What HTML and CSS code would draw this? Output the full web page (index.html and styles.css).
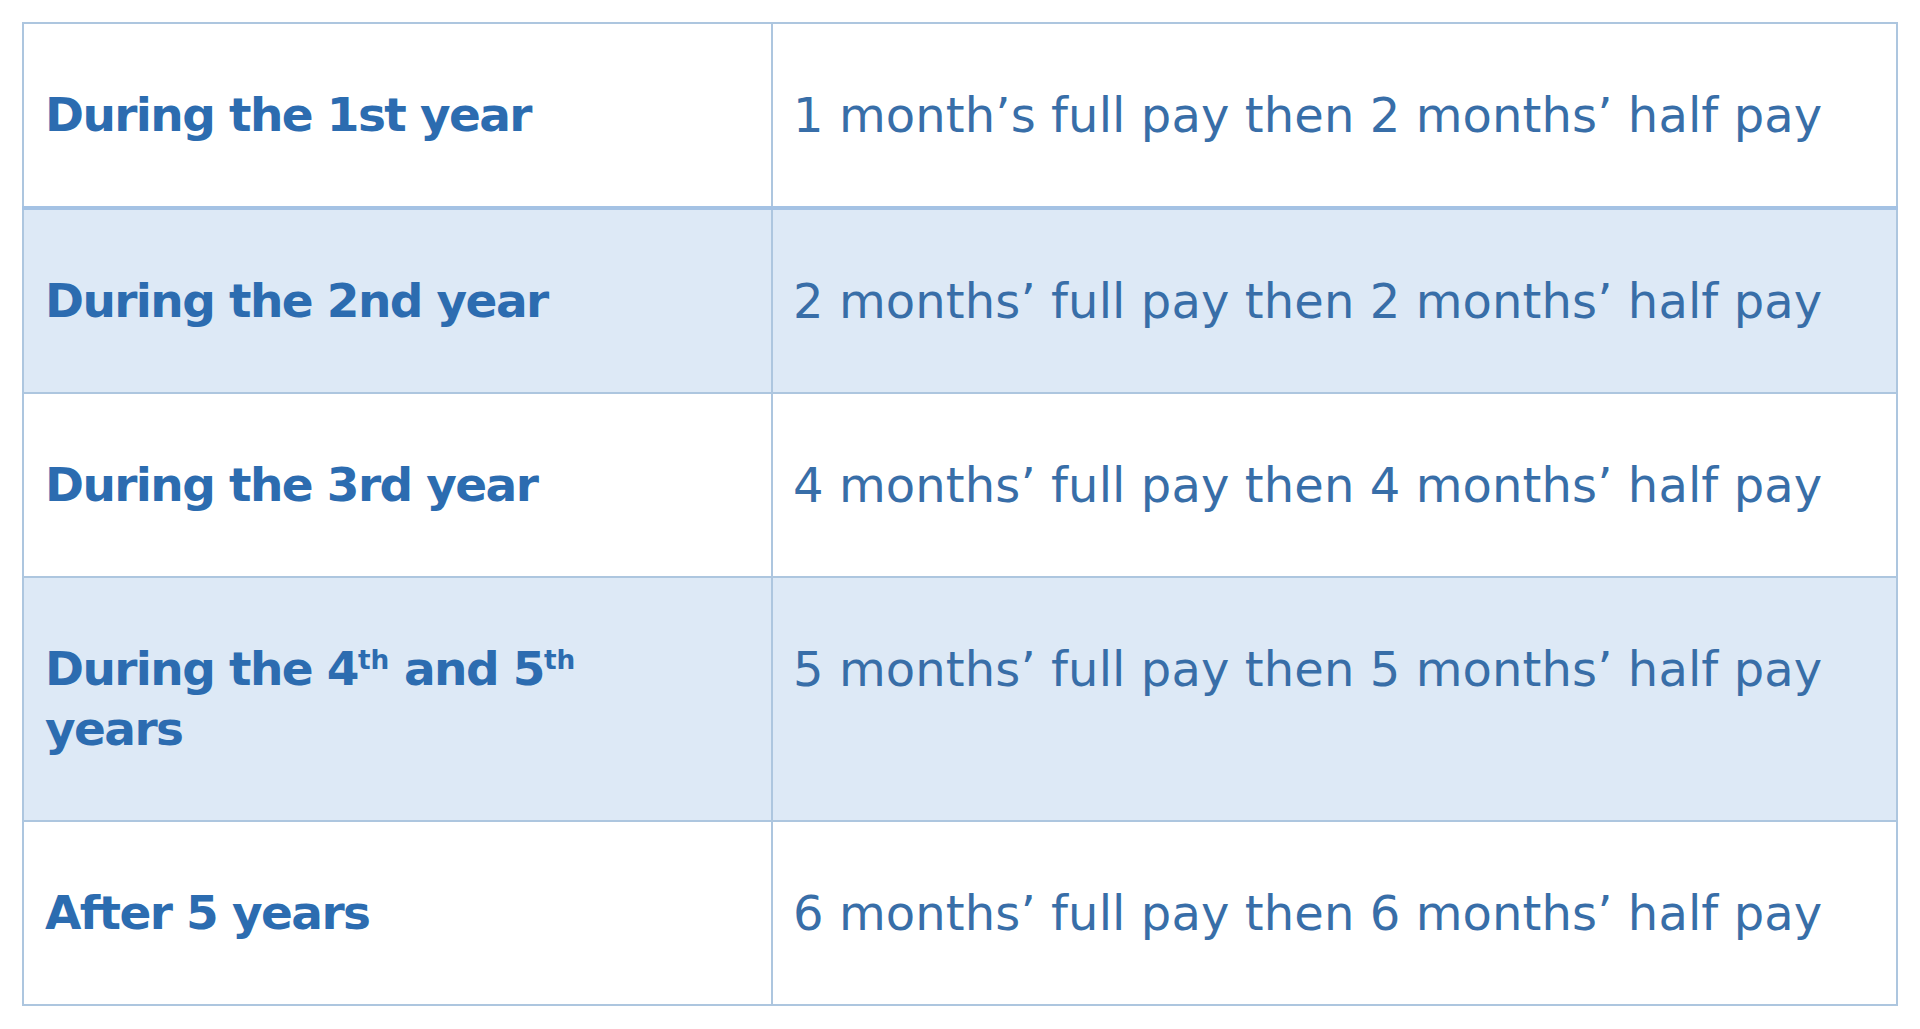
FILE: index.html
```html
<!DOCTYPE html>
<html lang="en">
<head>
<meta charset="utf-8">
<title>Sick pay entitlement</title>
<link rel="stylesheet" href="styles.css">
</head>
<body>
<div class="page">
  <table class="pay-table">
    <colgroup>
      <col class="col-term">
      <col class="col-pay">
    </colgroup>
    <tbody>
      <tr class="row row-first">
        <th class="term">During the 1st year</th>
        <td class="pay">1 month’s full pay then 2 months’ half pay</td>
      </tr>
      <tr class="row row-shaded">
        <th class="term">During the 2nd year</th>
        <td class="pay">2 months’ full pay then 2 months’ half pay</td>
      </tr>
      <tr class="row">
        <th class="term">During the 3rd year</th>
        <td class="pay">4 months’ full pay then 4 months’ half pay</td>
      </tr>
      <tr class="row row-shaded">
        <th class="term">During the 4<sup>th</sup> and 5<sup>th</sup> years</th>
        <td class="pay">5 months’ full pay then 5 months’ half pay</td>
      </tr>
      <tr class="row">
        <th class="term">After 5 years</th>
        <td class="pay">6 months’ full pay then 6 months’ half pay</td>
      </tr>
    </tbody>
  </table>
</div>
</body>
</html>
```
FILE: styles.css
```css
html, body {
  margin: 0;
  padding: 0;
  background: #ffffff;
}

.page {
  padding: 22px 22px 24px 22px;
}

.pay-table {
  width: 1876px;
  border-collapse: collapse;
  table-layout: fixed;
  font-family: "DejaVu Sans", "Liberation Sans", sans-serif;
  font-size: 48px;
  line-height: 58px;
  color: #2f6daa;
}

.col-term {
  width: 749px;
}

.row > th,
.row > td {
  border: 2px solid #adc6df;
  vertical-align: top;
  text-align: left;
  padding: 62px 20px 62px 21px;
}

.row-first > th,
.row-first > td {
  border-bottom: 4px solid #a4c2e4;
}

.row-shaded > th,
.row-shaded > td {
  background: #dde9f6;
}

.row > .term {
  font-weight: 700;
  font-size: 47px;
  line-height: 60px;
  color: #2c6cb0;
  letter-spacing: -1.6px;
  padding-top: 61px;
  padding-bottom: 61px;
  padding-right: 120px;
}

.row > .pay {
  font-weight: 400;
  color: #386ea8;
  letter-spacing: 0.1px;
  padding-left: 20px;
}

.term sup {
  font-size: 0.56em;
  line-height: 0;
  letter-spacing: 0;
  vertical-align: 0.62em;
}
```
